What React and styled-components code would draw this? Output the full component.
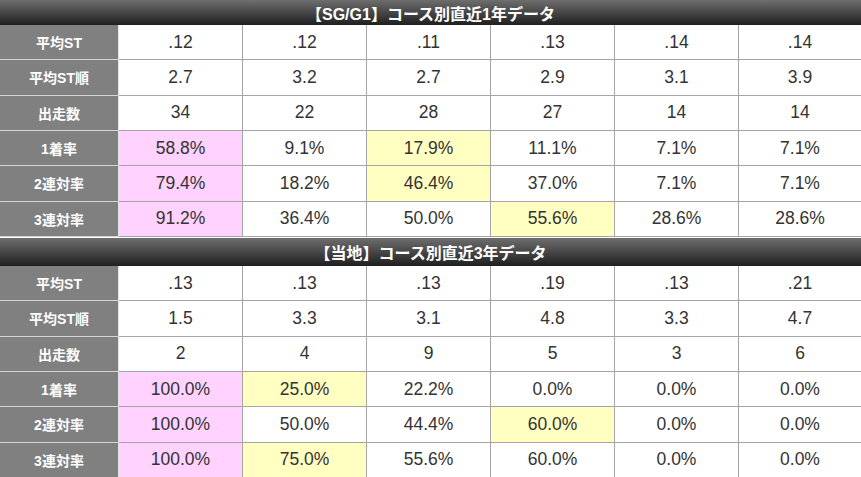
import styled, { createGlobalStyle } from "styled-components";

const GlobalStyle = createGlobalStyle`
  html, body {
    margin: 0;
    padding: 0;
    background: #ffffff;
  }
  body {
    font-family: "Liberation Sans", Arial, "Noto Sans CJK JP", sans-serif;
  }
`;

// 色付け: p = ピンク(1位), y = 黄色(注目)
const tables = [
  {
    title: "【SG/G1】コース別直近1年データ",
    headHeight: 25,
    rows: [
      { label: "平均ST", values: [".12", ".12", ".11", ".13", ".14", ".14"] },
      { label: "平均ST順", values: ["2.7", "3.2", "2.7", "2.9", "3.1", "3.9"] },
      { label: "出走数", values: ["34", "22", "28", "27", "14", "14"] },
      { label: "1着率", values: ["58.8%", "9.1%", "17.9%", "11.1%", "7.1%", "7.1%"], marks: ["p", "", "y", "", "", ""] },
      { label: "2連対率", values: ["79.4%", "18.2%", "46.4%", "37.0%", "7.1%", "7.1%"], marks: ["p", "", "y", "", "", ""] },
      { label: "3連対率", values: ["91.2%", "36.4%", "50.0%", "55.6%", "28.6%", "28.6%"], marks: ["p", "", "", "y", "", ""] },
    ],
  },
  {
    title: "【当地】コース別直近3年データ",
    headHeight: 28,
    rows: [
      { label: "平均ST", values: [".13", ".13", ".13", ".19", ".13", ".21"] },
      { label: "平均ST順", values: ["1.5", "3.3", "3.1", "4.8", "3.3", "4.7"] },
      { label: "出走数", values: ["2", "4", "9", "5", "3", "6"] },
      { label: "1着率", values: ["100.0%", "25.0%", "22.2%", "0.0%", "0.0%", "0.0%"], marks: ["p", "y", "", "", "", ""] },
      { label: "2連対率", values: ["100.0%", "50.0%", "44.4%", "60.0%", "0.0%", "0.0%"], marks: ["p", "", "", "y", "", ""] },
      { label: "3連対率", values: ["100.0%", "75.0%", "55.6%", "60.0%", "0.0%", "0.0%"], marks: ["p", "y", "", "", "", ""] },
    ],
  },
];

const markColor = { p: "#ffd2ff", y: "#ffffc2", "": "#ffffff" };

const App = () => {
  return (
    <>
      <GlobalStyle />
      <Page>
        {tables.map((t) => (
          <Section key={t.title}>
            <Head height={t.headHeight}>{t.title}</Head>
            <Grid>
              {t.rows.map((r) => (
                <Row key={r.label}>
                  <Label>{r.label}</Label>
                  {r.values.map((v, i) => (
                    <Cell key={i} bg={markColor[(r.marks && r.marks[i]) || ""]}>
                      {v}
                    </Cell>
                  ))}
                </Row>
              ))}
            </Grid>
          </Section>
        ))}
      </Page>
    </>
  );
};

const Page = styled.div`
  width: 861px;
`;

const Section = styled.section`
  margin-bottom: 1px;
`;

const Head = styled.div`
  height: ${(props) => props.height}px;
  display: flex;
  align-items: center;
  justify-content: center;
  background: linear-gradient(#6e6e6e, #1f1f1f);
  color: #ffffff;
  font-family: "Liberation Sans", Arial, "Noto Sans CJK JP", sans-serif;
  font-weight: bold;
  font-size: 16px;
`;

const Grid = styled.div`
  display: flex;
  flex-direction: column;
`;

const Row = styled.div`
  display: grid;
  grid-template-columns: 119px repeat(5, 124px) 1fr;
  height: 35.33px;
`;

const Label = styled.div`
  box-sizing: border-box;
  display: flex;
  align-items: center;
  justify-content: center;
  background: #808080;
  color: #ffffff;
  font-family: "Liberation Sans", Arial, "Noto Sans CJK JP", sans-serif;
  font-weight: bold;
  font-size: 14px;
  border-right: 1px solid #e4e4e4;
  border-bottom: 1px solid #d4d4d4;
`;

const Cell = styled.div`
  box-sizing: border-box;
  display: flex;
  align-items: center;
  justify-content: center;
  background: ${(props) => props.bg};
  color: #333333;
  font-size: 17.5px;
  border-right: 1px solid #a5a5a5;
  border-bottom: 1px solid #a5a5a5;
  &:last-child {
    border-right: none;
  }
`;

export default App;
